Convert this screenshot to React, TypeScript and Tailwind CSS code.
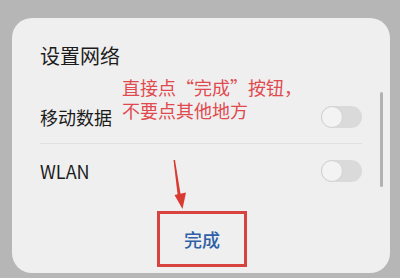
import React from "react";

function Toggle() {
  return (
    <div className="relative h-[22px] w-[41px] shrink-0 rounded-full bg-[#dadada]">
      <div className="absolute left-0 top-0 h-[22px] w-[22px] rounded-full border border-[#d2d2d2] bg-[#f3f3f3]" />
    </div>
  );
}

export default function App() {
  return (
    <div
      className="relative h-[278px] w-[400px] overflow-hidden bg-[#b6b6b6] pl-[12px] pt-[18px]"
      style={{ fontFamily: '"Noto Sans CJK SC", "Noto Sans", sans-serif' }}
    >
      <div className="relative flex h-[255px] w-[378px] flex-col rounded-[20px] bg-[#efefef] pl-[28px] pt-[25px]">
        <div className="h-[26px] text-[20px] leading-[26px] text-[#1c1c1c]">设置网络</div>
        <div className="mt-[21px] flex h-[54px] w-[322px] items-center justify-between border-b border-[#e0e0e0]">
          <span className="text-[18px] leading-[24px] text-[#1c1c1c]">移动数据</span>
          <Toggle />
        </div>
        <div className="flex h-[54px] w-[322px] items-center justify-between">
          <span className="text-[18px] leading-[24px] text-[#1c1c1c]">WLAN</span>
          <Toggle />
        </div>
        <div className="mt-[13px] flex w-[324px] justify-center">
          <div className="flex h-[56px] w-[90px] items-center justify-center border-[3px] border-[#d8423f] text-[18px] font-medium text-[#2f5fa6]">
            完成
          </div>
        </div>
        <div className="absolute left-[110px] top-[58px] text-[18px] leading-[23px] text-[#e04a4e]">
          <div>直接点“完成”按钮，</div>
          <div>不要点其他地方</div>
        </div>
        <div className="absolute left-[368px] top-[74px] h-[95px] w-[3px] rounded-full bg-[#b2b2b2]" />
      </div>
      <svg className="absolute left-0 top-0" width="400" height="278" viewBox="0 0 400 278">
        <polygon points="173.5,160 175,160 181,197 178,198" fill="#d93a32" />
        <polygon points="174.5,195 186,192.5 182.5,209" fill="#d93a32" />
      </svg>
    </div>
  );
}
